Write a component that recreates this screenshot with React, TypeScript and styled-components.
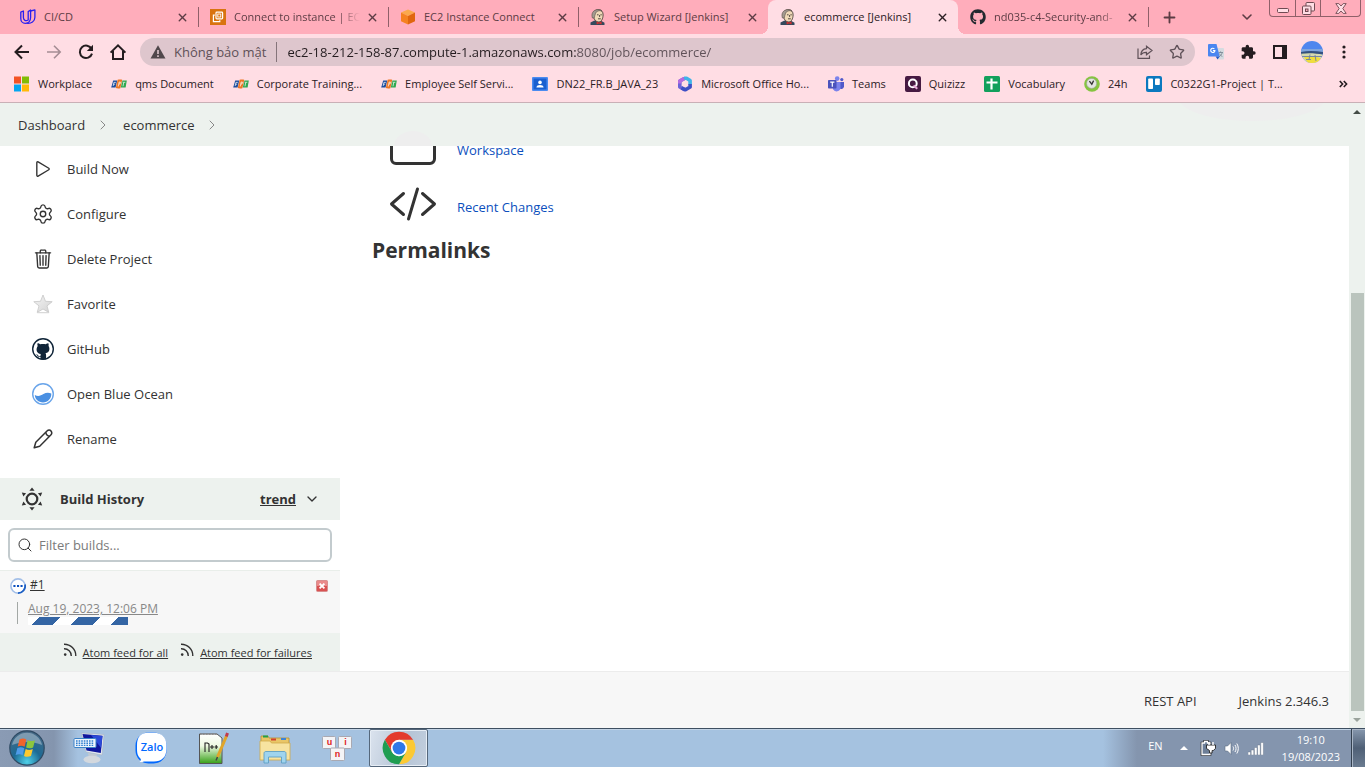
import React from 'react';
import styled, { createGlobalStyle, css } from 'styled-components';
import { FaGithub } from 'react-icons/fa';
import { IoPlayOutline, IoTrashOutline } from 'react-icons/io5';
import { Settings, X, Plus, ChevronDown, ChevronRight, Search, Star } from 'lucide-react';

const ink = '#333333';
const sage = '#edf2ee';
const uiFont = '"Open Sans", "Noto Sans", sans-serif';

const GlobalStyle = createGlobalStyle`
  *, *::before, *::after { box-sizing: border-box; }
  body { margin: 0; font-family: ${uiFont}; font-size: 13px; color: ${ink}; background: #fff; }
  button, input { font: inherit; color: inherit; }
  button { border: 0; padding: 0; background: none; display: flex; align-items: center; justify-content: center; }
  a { color: inherit; text-decoration: none; }
  svg { display: block; flex: none; }
  ul, ol { margin: 0; padding: 0; list-style: none; }
`;

const Screen = styled.div`
  min-height: 100vh;
  display: flex;
  flex-direction: column;
`;

/* ---------- browser frame ---------- */

const TabStrip = styled.div`
  display: flex;
  align-items: center;
  height: 34px;
  padding-left: 8px;
  background: #ffadbb;
`;

const TabItem = styled.div<{ $active?: boolean; $line?: boolean }>`
  position: relative;
  width: 190px;
  height: 34px;
  padding: 0 8px 0 12px;
  display: flex;
  align-items: center;
  color: ${p => (p.$active ? '#2b2024' : '#5c3c44')};
  ${p => p.$line && css`
    &::after {
      content: '';
      position: absolute;
      right: -1px;
      top: 7px;
      width: 1px;
      height: 20px;
      background: #8f6069;
    }
  `}
  ${p => p.$active && css`
    background: #ffdde4;
    border-radius: 8px 8px 0 0;
    &::before, &::after {
      content: '';
      position: absolute;
      bottom: 0;
      width: 8px;
      height: 8px;
    }
    &::before { left: -8px; background: radial-gradient(circle at 0 0, transparent 8px, #ffdde4 8px); }
    &::after { right: -8px; background: radial-gradient(circle at 100% 0, transparent 8px, #ffdde4 8px); }
  `}
`;

const TabLink = styled.a`
  display: flex;
  align-items: center;
  gap: 8px;
  flex: 1;
  min-width: 0;
`;

const TabTitle = styled.span`
  flex: 1;
  white-space: nowrap;
  line-height: 20px;
  font-size: 11px;
`;

const FadingTitle = styled(TabTitle)`
  mask-image: linear-gradient(to right, #000 104px, transparent 126px);
`;

const TabClose = styled.button`
  width: 16px;
  height: 16px;
  margin-left: 4px;
`;

const StripButton = styled.button`
  width: 28px;
  height: 28px;
  margin-left: 7px;
  color: #5c3c44;
`;

const StripEnd = styled.div`
  margin-left: auto;
  display: flex;
  align-self: stretch;
  align-items: center;
  gap: 8px;
  padding-right: 4px;
`;

const WindowControls = styled.div`
  display: flex;
  align-self: flex-start;
  height: 17px;
  border: 1px solid #8f6069;
  border-top: 0;
  border-radius: 0 0 4px 4px;
`;

const WindowButton = styled.button<{ $wide?: boolean }>`
  width: ${p => (p.$wide ? 40 : 25)}px;
  height: 16px;
  & + & { border-left: 1px solid #8f6069; }
`;

const Toolbar = styled.div`
  display: flex;
  align-items: center;
  height: 36px;
  padding: 0 5px 0 6px;
  background: #ffdde4;
`;

const ToolButton = styled.button<{ $dim?: boolean }>`
  width: 32px;
  height: 32px;
  color: ${p => (p.$dim ? '#a58d94' : '#241c1f')};
`;

const Omnibox = styled.form`
  flex: 1;
  display: flex;
  align-items: center;
  height: 28px;
  margin: 0 5px 0 6px;
  padding: 0 2px 0 10px;
  border-radius: 14px;
  background: #dec6cd;
  color: #5f5158;
`;

const SiteInfo = styled.button`
  gap: 8px;
  height: 20px;
  padding-right: 10px;
  border-right: 1px solid #85747a;
  font-size: 13px;
  line-height: 18px;
  white-space: nowrap;
`;

const Address = styled.input`
  flex: 1;
  min-width: 0;
  height: 26px;
  margin-left: 10px;
  padding: 0;
  border: 0;
  outline: 0;
  font-size: 13px;
  color: #241c1f;
  -webkit-text-fill-color: transparent;
  background: linear-gradient(to right, #241c1f 290px, #5f5158 290px);
  -webkit-background-clip: text;
  background-clip: text;
`;

const Bookmarks = styled.nav`
  display: flex;
  align-items: center;
  height: 33px;
  padding: 0 17px 4px 14px;
  gap: 19px;
  background: #ffdde4;
  border-bottom: 1px solid #c9b0b6;
  white-space: nowrap;
`;

const Bookmark = styled.a`
  display: flex;
  align-items: center;
  gap: 8px;
  font-size: 11px;
  line-height: 16px;
  color: #2b2024;
`;

const MoreBookmarks = styled.button`
  margin-left: auto;
`;

/* ---------- page ---------- */

const Viewport = styled.div`
  flex: 1;
  display: flex;
`;

const Page = styled.div`
  flex: 1;
  min-width: 0;
  display: flex;
  flex-direction: column;
`;

const Breadcrumbs = styled.nav`
  position: relative;
  height: 43px;
  overflow: hidden;
  background: ${sage};
  padding: 0 18px;
  ol { position: relative; display: flex; align-items: center; height: 43px; }
  li { display: flex; align-items: center; }
`;

const Crumb = styled.a`
  font-size: 13px;
  line-height: 20px;
  color: ${ink};
`;

const CrumbArrow = styled.button`
  width: 38px;
  height: 20px;
  padding-right: 3px;
  color: #888;
`;

const Haze = styled.span<{ $left: number; $top: number; $w: number; $h: number }>`
  position: absolute;
  left: ${p => p.$left}px;
  top: ${p => p.$top}px;
  width: ${p => p.$w}px;
  height: ${p => p.$h}px;
  border-radius: 50%;
  background: #eeeeee;
`;

const Body = styled.div`
  flex: 1;
  display: flex;
  background: #fff;
`;

const Side = styled.aside`
  width: 340px;
  display: flex;
  flex-direction: column;
`;

const TaskList = styled.ul`
  margin-bottom: 17px;
`;

const TaskLink = styled.a`
  display: flex;
  align-items: center;
  gap: 12px;
  height: 45px;
  padding-left: 31px;
  font-size: 13px;
  font-weight: 500;
  line-height: 20px;
`;

const TaskIcon = styled.span`
  width: 24px;
  height: 24px;
  display: flex;
  align-items: center;
  justify-content: center;
`;

const HistoryHead = styled.div`
  display: flex;
  align-items: center;
  height: 42px;
  padding: 0 20px 1px;
  background: ${sage};
  font-size: 13px;
  font-weight: 700;
`;

const HistoryTitle = styled.h2`
  flex: 1;
  margin: 0 0 0 16px;
  font-size: 13px;
  font-weight: 700;
  line-height: 20px;
`;

const TrendLink = styled.a`
  text-decoration: underline;
  margin-right: 8px;
`;

const FilterBox = styled.label`
  display: flex;
  align-items: center;
  gap: 6px;
  height: 34px;
  margin: 8px;
  padding: 0 8px 0 7px;
  border: 2px solid #c3cbce;
  border-radius: 6px;
  background: #fff;
`;

const FilterInput = styled.input`
  flex: 1;
  min-width: 0;
  padding: 0;
  border: 0;
  outline: 0;
  background: none;
  font-size: 13px;
  &::placeholder { color: #7b7b7b; opacity: 1; }
`;

const BuildRow = styled.div`
  height: 63px;
  padding: 6px 12px 0 10px;
  background: #f7f7f7;
  border-top: 1px solid #e9eeea;
`;

const BuildTop = styled.div`
  display: flex;
  align-items: center;
  height: 18px;
`;

const BuildLink = styled.a`
  flex: 1;
  margin-left: 4px;
  padding-bottom: 2px;
  font-size: 12px;
  line-height: 16px;
  text-decoration: underline;
`;

const BuildInfo = styled.div`
  margin: 7px 0 0 7px;
  padding-left: 10px;
  height: 22px;
  border-left: 1px solid #a3a8a5;
`;

const BuildDate = styled.a`
  display: block;
  font-size: 12px;
  line-height: 14px;
  color: #888;
  text-decoration: underline;
`;

const Progress = styled.div`
  width: 100px;
  height: 8px;
  margin-top: 1px;
  background: repeating-linear-gradient(135deg, #fff 0 8px, #3465a4 8px 23px, #fff 23px 28px);
`;

const Feeds = styled.div`
  display: flex;
  justify-content: flex-end;
  gap: 12px;
  height: 38px;
  padding: 10px 28px 0 0;
  background: ${sage};
`;

const FeedLink = styled.a`
  display: flex;
  gap: 6px;
  font-size: 11px;
  line-height: 20px;
  span { text-decoration: underline; }
`;

const Main = styled.main`
  flex: 1;
  overflow: hidden;
  padding: 0 32px;
`;

const ShortcutList = styled.ul`
  margin: -23px 0 0 17px;
  display: flex;
  flex-direction: column;
  gap: 9px;
`;

const Shortcut = styled.a`
  display: flex;
  align-items: center;
  gap: 20px;
  height: 48px;
  font-size: 13px;
  color: #0b4fbd;
  span { padding-top: 6px; line-height: 20px; }
`;

const Heading = styled.h2`
  margin: 6px 0 0;
  font-size: 21px;
  font-weight: 700;
  line-height: 32px;
`;

const Footer = styled.footer`
  display: flex;
  align-items: center;
  justify-content: flex-end;
  gap: 42px;
  height: 57px;
  padding: 2px 20px 0;
  background: #f7f7f7;
  border-top: 1px solid #ececec;
  font-size: 13px;
  line-height: 20px;
`;

const ScrollTrack = styled.div`
  width: 16px;
  display: flex;
  flex-direction: column;
  align-items: center;
  background: ${sage};
`;

const ScrollArrow = styled.button`
  width: 16px;
  height: 17px;
`;

const ScrollSpace = styled.div`
  flex: 173;
`;

const ScrollThumb = styled.div`
  flex: 418;
  width: 13px;
  background: #bac4bd;
`;

/* ---------- taskbar ---------- */

const Taskbar = styled.div`
  display: flex;
  align-items: stretch;
  height: 39px;
  border-top: 1px solid #3e4f61;
  box-shadow: inset 0 1px 0 #c3d4e6;
  background: linear-gradient(to right, #8a9bb4 0, #8495ae 54px, #a5c2e0 78px, #a5c2e0 calc(100% - 262px), #8495ae calc(100% - 228px));
`;

const StartButton = styled.button`
  width: 54px;
  margin-right: 4px;
`;

const TaskButton = styled.button<{ $open?: boolean }>`
  width: ${p => (p.$open ? 59 : 62)}px;
  ${p => p.$open && css`
    margin-left: 1px;
    border: 1px solid #55677b;
    border-radius: 2px;
    box-shadow: inset 0 0 0 1px #e6edf5;
    background: linear-gradient(105deg, #dbe3ee, #b5c4d6 60%, #c3cfde);
  `}
`;

const Tray = styled.div`
  margin-left: auto;
  display: flex;
  align-items: center;
  color: #fff;
  font-size: 11px;
`;

const Language = styled.button`
  margin-right: 9px;
  padding-bottom: 5px;
`;

const TrayButton = styled.button`
  width: 24px;
  height: 24px;
`;

const Clock = styled.time`
  margin: 0 11px 0 14px;
  text-align: center;
  line-height: 17px;
`;

const ShowDesktop = styled.button`
  width: 14px;
  height: 38px;
  border-left: 1px solid #33404f;
  box-shadow: inset 1px 1px 0 #a9b6c6;
  background: linear-gradient(#8798ae, #4f6076 50%, #6a7b90);
`;

/* ---------- drawings ---------- */

const UdacityIcon = () => (
  <svg width="16" height="16" viewBox="0 0 16 16" fill="none" stroke="#2a20f0" strokeWidth="1.3" strokeLinejoin="round">
    <path d="M.8 3.200 3.400 2v6.600c0 2.600 2.400 3.800 4.800 2.400V2.600L10.600 1v7.600c0 3.600-2.400 5.800-5.200 5.800C2.400 14.400.8 12 .8 9.400z" />
    <path d="M10.600 2 14.900.8v7.400c0 4-3.600 6.800-8.400 6" />
  </svg>
);

const Ec2Icon = () => (
  <svg width="16" height="16" viewBox="0 0 16 16" fill="none" stroke="#fff" strokeWidth="1.200">
    <rect width="16" height="16" fill="#d9730f" stroke="none" />
    <rect x="6" y="3.200" width="6.600" height="6.600" rx=".8" />
    <rect x="7.800" y="5" width="3" height="3" strokeWidth=".9" />
    <path d="M4.800 6.200H3.400v6.400h6.400v-1.400" />
  </svg>
);

const CubeIcon = () => (
  <svg width="16" height="16" viewBox="0 0 16 16">
    <path d="M8 .5 15 3.600 8 7 1 3.600z" fill="#fba94c" />
    <path d="M1 3.600 8 7v8.600l-7-3.400z" fill="#f58220" />
    <path d="M15 3.600 8 7v8.600l7-3.400z" fill="#e0660e" />
  </svg>
);

const ButlerIcon = () => (
  <svg width="16" height="16" viewBox="0 0 16 16">
    <path d="M.5 16v-2.600l4-1.800 6.500.2 3.500 2V16z" fill="#33495c" />
    <path d="M3.200 6C3 2.400 5 .8 8.200.8s5 1.800 4.900 5.200c-.1 3.600-1.600 7-4.400 7S3.300 9.800 3.200 6z" fill="#efd9b7" stroke="#4a3f3a" strokeWidth=".9" />
    <path d="M2.400 9C1 5 2.600 1.200 7.600.5c2-.2 3.600.4 4.400 1.500-3-.8-5.600 0-6.400 2.200C5 6 4.600 7.400 4.200 9z" fill="#a39a90" stroke="#4a3f3a" strokeWidth=".5" />
    <path d="M7 5.800h1.600M10.400 5.800h1.400M9.600 6v2M8 9.800h2.800" fill="none" stroke="#4a3f3a" strokeWidth=".9" />
    <path d="M6.600 12.400 9 13.600l2.600-1.200v3L9 14.600l-2.400.8z" fill="#d02f2f" />
  </svg>
);

const MicrosoftIcon = () => (
  <svg width="16" height="16" viewBox="0 0 16 16">
    <path d="M0 .5h7v7H0z" fill="#f35325" />
    <path d="M8 .5h7v7H8z" fill="#81bc06" />
    <path d="M0 8.500h7v7H0z" fill="#05a6f0" />
    <path d="M8 8.500h7v7H8z" fill="#ffba08" />
  </svg>
);

const FptIcon = () => (
  <svg width="16" height="16" viewBox="0 0 16 16">
    <path d="M2.200 4.500h4L4.600 11.500H.2z" fill="#1f4f9e" />
    <path d="M6.600 3.800c1.600-.5 3.200-.5 4.600 0L9.400 12.200c-1.800.4-3.200.4-4.600-.2z" fill="#ee7623" />
    <path d="M11.400 4.500h4.400l-1.200 7H9.800z" fill="#2fa84f" />
    <path d="M2.200 10l.7-3.600h1.900M2.600 8.200h1.500M7.200 10.500l1-4.500h1.200l-.4 2H7.900M12 10.300l.7-3.700M11.700 6.300h2.600" fill="none" stroke="#fff" strokeWidth=".7" />
  </svg>
);

const ClassroomIcon = () => (
  <svg width="16" height="16" viewBox="0 0 16 16">
    <rect y="1" width="16" height="14" rx="1" fill="#4a8bf0" />
    <rect x="1.500" y="2.500" width="13" height="11" fill="#1a5fd0" />
    <circle cx="8" cy="6.400" r="1.800" fill="#fff" />
    <path d="M4.400 11.500c0-1.700 1.800-2.500 3.600-2.500s3.600.8 3.600 2.500z" fill="#fff" />
  </svg>
);

const OfficeIcon = () => (
  <svg width="16" height="16" viewBox="0 0 16 16" fill="none" strokeWidth="3.600" strokeLinejoin="round">
    <path d="M7.500 2.500 2.800 5v6L8 13.800" stroke="#6a63d9" />
    <path d="M7 2.300h2.500l3.600 2.300v4" stroke="#3fb4e8" />
    <path d="M13.100 8v3L8.500 13.800 4.500 11.800" stroke="#3d4fc4" />
    <path d="M2.800 7.500V5L7 2.600" stroke="#b56be0" />
  </svg>
);

const TeamsIcon = () => (
  <svg width="16" height="16" viewBox="0 0 16 16">
    <circle cx="9.200" cy="2.600" r="2.300" fill="#7b83eb" />
    <circle cx="13.800" cy="3.600" r="1.600" fill="#5059c9" />
    <path d="M11 6h5v4.500a2.800 2.800 0 0 1-5 1.500z" fill="#5059c9" />
    <path d="M5 6h7.500v5.500a4 4 0 0 1-7.500 1.800z" fill="#7b83eb" />
    <rect y="4" width="8.500" height="8.500" rx=".8" fill="#4b53bc" />
    <path d="M2.200 6.200h4.200M4.300 6.200v4.600" stroke="#fff" strokeWidth="1.200" />
  </svg>
);

const QuizizzIcon = () => (
  <svg width="16" height="16" viewBox="0 0 16 16" fill="none">
    <rect width="16" height="16" rx="2" fill="#461a42" />
    <circle cx="7.800" cy="7.400" r="3.900" stroke="#fff" strokeWidth="2" />
    <path d="M8.500 9.500l3.800 3.300" stroke="#e8a8d8" strokeWidth="2" />
  </svg>
);

const SheetIcon = () => (
  <svg width="16" height="16" viewBox="0 0 16 16">
    <rect width="16" height="16" rx="1.500" fill="#12a05c" />
    <path d="M2.500 6.500h11M7.500 2.500v11" stroke="#fff" strokeWidth="2.200" />
  </svg>
);

const ClockIcon = () => (
  <svg width="16" height="16" viewBox="0 0 16 16">
    <circle cx="8" cy="8" r="7.800" fill="#86c440" />
    <circle cx="7.600" cy="7.400" r="5" fill="#e4e6e2" stroke="#9aa094" strokeWidth=".6" />
    <path d="M5.400 5.200l2.400 3 1.800-3.600" fill="none" stroke="#333" strokeWidth="1.300" />
  </svg>
);

const TrelloIcon = () => (
  <svg width="16" height="16" viewBox="0 0 16 16">
    <rect width="16" height="16" rx="2" fill="#0b79bf" />
    <rect x="2.200" y="2.400" width="4.800" height="10.600" rx=".8" fill="#fff" />
    <rect x="9" y="2.400" width="4.800" height="6.600" rx=".8" fill="#fff" />
  </svg>
);

const BackIcon = () => (
  <svg width="16" height="16" viewBox="0 0 16 16" fill="none" stroke="currentColor" strokeWidth="2">
    <path d="M15 8H2M8 1.500 1.500 8 8 14.500" />
  </svg>
);

const ForwardIcon = () => (
  <svg width="16" height="16" viewBox="0 0 16 16" fill="none" stroke="currentColor" strokeWidth="1.600">
    <path d="M1 8h13M8 1.800 14.200 8 8 14.200" />
  </svg>
);

const ReloadIcon = () => (
  <svg width="16" height="16" viewBox="0 0 16 16" fill="none">
    <path d="M13.600 5A6.200 6.200 0 1 0 14 9.600" stroke="currentColor" strokeWidth="2" />
    <path d="M15 .8v6.200H8.800z" fill="currentColor" />
  </svg>
);

const HomeIcon = () => (
  <svg width="18" height="18" viewBox="0 0 18 18" fill="none" stroke="currentColor" strokeWidth="2">
    <path d="M1.600 9.600 9 2.300l7.400 7.300M4 8v8h10V8" />
  </svg>
);

const WarningIcon = () => (
  <svg width="16" height="16" viewBox="0 0 16 16">
    <path d="M8 1.200 15.500 14.500H.5z" fill="#50474b" />
    <path d="M8 6v4M8 11.300v1.600" stroke="#dec6cd" strokeWidth="1.600" />
  </svg>
);

const ShareIcon = () => (
  <svg width="16" height="16" viewBox="0 0 16 16" fill="none" stroke="#5f5158" strokeWidth="1.200">
    <path d="M1 4.500V14.300H12.500V11.500" />
    <path d="M9.500 2.200 15 6.500 9.500 10.700V8.300C6.600 8.200 5 9 3.800 11 4 7.500 6 5 9.500 4.700z" />
  </svg>
);

const TranslateIcon = () => (
  <svg width="16" height="16" viewBox="0 0 16 16">
    <path d="M7 4h8a1 1 0 0 1 1 1v9.500a1 1 0 0 1-1 1H10z" fill="#d5dbe0" />
    <path d="M10.500 8.500h4.500M12.600 7.400v1.200M14.200 8.800c-.6 2-2 3.200-3.200 4M11.400 9.500c.8 1.600 1.800 2.500 3 3" fill="none" stroke="#7d8a96" strokeWidth=".9" />
    <path d="M1 0h7.500l3.200 12.500H1a1 1 0 0 1-1-1V1a1 1 0 0 1 1-1z" fill="#4a86f0" />
    <path d="M7.600 12.500h4.100L9.600 15.600z" fill="#1f57c9" />
    <path d="M6.400 5a2.100 2.100 0 1 0 .5 1.600H4.900" fill="none" stroke="#fff" strokeWidth="1.100" />
  </svg>
);

const PuzzleIcon = () => (
  <svg width="16" height="16" viewBox="0 0 24 24" fill="currentColor">
    <path d="M21 11h-1.500V7c0-1.100-.9-2-2-2h-4V3.500a2.500 2.500 0 0 0-5 0V5h-4c-1.100 0-2 .9-2 2v3.800H4c1.500 0 2.700 1.200 2.700 2.700S5.500 16.200 4 16.200H2.500V20c0 1.100.9 2 2 2h3.800v-1.500c0-1.500 1.200-2.700 2.700-2.700s2.700 1.200 2.700 2.700V22h3.800c1.100 0 2-.9 2-2v-4H21a2.500 2.500 0 0 0 0-5z" />
  </svg>
);

const PanelIcon = () => (
  <svg width="14" height="14" viewBox="0 0 14 14">
    <path d="M1 1h12v12H1z" fill="none" stroke="currentColor" strokeWidth="2" />
    <path d="M9 1h4v12H9z" fill="currentColor" />
  </svg>
);

const AvatarIcon = () => (
  <svg width="22" height="22" viewBox="0 0 22 22">
    <clipPath id="avatar"><circle cx="11" cy="11" r="11" /></clipPath>
    <g clipPath="url(#avatar)">
      <rect width="22" height="22" fill="#4f86ee" />
      <path d="M0 8h22v3H0z" fill="#7fa4dc" />
      <path d="M0 11c7-1.500 15-1 22 0v2.500H0z" fill="#33507e" />
      <path d="M0 12.800c8-1 15-.5 22 1V22H0z" fill="#d5d9ae" />
      <path d="M3 16c6-2 12-1 18 2l-2 4H7z" fill="#f0dd3c" />
      <path d="M1 15.500h20M5 18.500h5M9 13.500l-1 5M14 14l1 6" stroke="#6b7fa6" strokeWidth=".9" />
    </g>
  </svg>
);

const DotsIcon = () => (
  <svg width="4" height="14" viewBox="0 0 4 14" fill="currentColor">
    <circle cx="2" cy="2" r="1.600" /><circle cx="2" cy="7" r="1.600" /><circle cx="2" cy="12" r="1.600" />
  </svg>
);

const MoreIcon = () => (
  <svg width="9" height="8" viewBox="0 0 9 8" fill="none" stroke="#241c1f" strokeWidth="1.600">
    <path d="M.8 1 3.600 4 .8 7M4.800 1 7.600 4 4.800 7" />
  </svg>
);

const MinimizeIcon = () => (
  <svg width="12" height="12" viewBox="0 0 12 12">
    <rect x=".5" y="6.500" width="11" height="4" rx="1" fill="#ffdde4" stroke="#6e4a52" />
  </svg>
);

const RestoreIcon = () => (
  <svg width="13" height="13" viewBox="0 0 13 13" fill="#ffdde4" stroke="#6e4a52">
    <rect x="4" y=".500" width="8.500" height="8.500" rx="1" />
    <rect x=".500" y="4" width="8.500" height="8.500" rx="1" />
    <rect x="3.500" y="7" width="2.500" height="2.500" fill="#ffadbb" />
  </svg>
);

const CloseWindowIcon = () => (
  <svg width="12" height="11" viewBox="0 0 12 11">
    <path d="M.8.6h3L6 3 8.200.6h3L7.800 5.500l3.400 4.900h-3L6 8 3.800 10.400h-3L4.200 5.500z" fill="#ffdde4" stroke="#6e4a52" strokeWidth=".9" />
  </svg>
);

const FavoriteIcon = () => (
  <svg width="20" height="20" viewBox="0 0 20 20">
    <defs>
      <linearGradient id="silver" x1="0" y1="0" x2="1" y2="1">
        <stop offset="0" stopColor="#f6f6f6" /><stop offset="1" stopColor="#d2d2d2" />
      </linearGradient>
    </defs>
    <path d="M10 1l2.500 6.300 6.700.4-5.200 4.200 1.800 6.500L10 15l-5.800 3.400L6 11.900.8 7.700l6.700-.4z" fill="url(#silver)" stroke="#c6c6c6" strokeWidth=".8" />
    <path d="M4.200 18.700h11.600" stroke="#d0d0d0" />
  </svg>
);

const OctocatIcon = () => (
  <svg width="22" height="22" viewBox="0 0 22 22">
    <circle cx="11" cy="11" r="10.300" fill="#fff" stroke="#0f2438" strokeWidth="1.400" />
    <path d="M5.600 5.200c1 0 2 .5 2.700 1 1.700-.4 3.700-.4 5.400 0 .8-.5 1.700-1 2.700-1 .4 1 .4 1.900.1 2.700 1.600 2 1.400 6.600-3 7.300.5.600.6 1.200.6 2.200v4H8.500v-2.600c-1.700.4-2.700-.1-3.400-1.300-.3-.6-.7-.9-1.100-1.200 1.200-.3 1.900.6 2.500 1.400.5.600 1.200.6 2 .4 0-1.200.1-1.600.4-2-4.700-.7-5.200-5.200-3.200-8.200-.3-.8-.5-1.700-.1-2.700z" fill="#0f2438" />
  </svg>
);

const OceanIcon = () => (
  <svg width="22" height="22" viewBox="0 0 22 22">
    <circle cx="11" cy="11" r="10.300" fill="#fff" stroke="#6aa5ea" strokeWidth="1.400" />
    <path d="M2.800 12c3.400 1.800 6 .6 8.600-.9 2.600-1.500 5-1.700 7.900-.6.300 5-3.500 8.900-8.300 8.900-4.500 0-8-3.300-8.200-7.400z" fill="#4a90e2" />
  </svg>
);

const PencilIcon = () => (
  <svg width="20" height="20" viewBox="0 0 20 20" fill="none" stroke={ink} strokeWidth="1.500" strokeLinejoin="round">
    <path d="M1.200 18.800 2.800 13.200 14 2c1.300-1.300 3-1.300 4 0s1 2.800-.2 4L6.700 17.200z" />
    <path d="M12.800 3.200c.2 2.300 1.700 3.800 4 4" />
  </svg>
);

const WeatherIcon = () => (
  <svg width="24" height="24" viewBox="0 0 24 24" fill={ink}>
    <circle cx="12" cy="12" r="5.300" fill="none" stroke={ink} strokeWidth="2.200" />
    <path d="M12 .5l2.600 3.300H9.400zM12 23.500l2.600-3.300H9.400zM1.800 5.500l4.300.7-2.700 3.400zM22.200 5.500l-4.300.7 2.700 3.400zM1.800 18.500l4.300-.7-2.700-3.400zM22.200 18.500l-4.300-.7 2.700-3.400z" />
  </svg>
);

const RunningIcon = () => (
  <svg width="16" height="16" viewBox="0 0 16 16" fill="none">
    <circle cx="8" cy="8" r="7.100" fill="#fff" stroke="#a3bfe8" strokeWidth="1.600" />
    <path d="M15 6.500A7.100 7.100 0 0 1 8 15.100" stroke="#1d5fc4" strokeWidth="1.800" />
    <path d="M3.400 8h2.100M7 8h2.100M10.500 8h2.100" stroke="#0b4fbd" strokeWidth="2" />
  </svg>
);

const StopIcon = () => (
  <svg width="12" height="12" viewBox="0 0 12 12">
    <rect x=".5" y=".5" width="11" height="11" rx="1" fill="#d95252" stroke="#d88f8f" />
    <path d="M1 1h10v5H1z" fill="#ea8a8a" />
    <path d="M3.600 3.600l4.800 4.800M8.400 3.600 3.600 8.400" stroke="#fff" strokeWidth="1.800" />
  </svg>
);

const FeedIcon = () => (
  <svg width="14" height="14" viewBox="0 0 14 14" fill="none" stroke={ink} strokeWidth="1.400">
    <path d="M1 1.200A11.500 11.500 0 0 1 12.800 13M1 5.800A7 7 0 0 1 8.300 13" />
    <circle cx="2.200" cy="11.600" r="1.300" fill={ink} stroke="none" />
  </svg>
);

const FolderIcon = () => (
  <svg width="48" height="48" viewBox="0 0 48 48" fill="none" stroke={ink} strokeWidth="3">
    <path d="M2.500 14v22a4.500 4.500 0 0 0 4.500 4.500h34a4.500 4.500 0 0 0 4.500-4.500V16a4.500 4.500 0 0 0-4.500-4.500H24L19 8H7a4.500 4.500 0 0 0-4.500 4.500z" />
  </svg>
);

const CodeIcon = () => (
  <svg width="48" height="48" viewBox="0 0 48 48" fill="none" stroke={ink} strokeWidth="3" strokeLinecap="round" strokeLinejoin="round">
    <path d="M14.500 13.500 2.500 24 14.500 34.500M33.500 13.500 45.500 24 33.500 34.500M28.500 9l-9 30" />
  </svg>
);

const Triangle = ({ down, color }: { down?: boolean; color: string }) => (
  <svg width="8" height="4" viewBox="0 0 8 4">
    <path d={down ? 'M0 0h8L4 4z' : 'M0 4h8L4 0z'} fill={color} />
  </svg>
);

const StartIcon = () => (
  <svg width="36" height="36" viewBox="0 0 36 36">
    <defs>
      <radialGradient id="orb" cx=".5" cy=".9" r=".9">
        <stop offset="0" stopColor="#4fd0e8" /><stop offset=".45" stopColor="#1c6a94" /><stop offset="1" stopColor="#4a6a86" />
      </radialGradient>
    </defs>
    <circle cx="18" cy="18" r="17.200" fill="url(#orb)" stroke="#2f4a63" strokeWidth="1.200" />
    <path d="M3 15a15.300 15.300 0 0 1 30 0c-9-4-20-4-30 0z" fill="#a9bccb" opacity=".6" />
    <path d="M10.500 9.500c2.600-1.400 4.700-1.200 6.800 0l-1.700 7.200c-2.200-1.300-4.400-1.300-6.900-.2z" fill="#f0642c" />
    <path d="M18.600 10.200c2.300 1.200 4.600 1.200 7.400 0l-1.900 7.200c-2.500 1.200-4.900 1-7 0z" fill="#8cc63e" />
    <path d="M8.400 18c2.500-1.100 4.700-1 6.900.3l-1.700 7c-2.200-1.300-4.400-1.300-7-.2z" fill="#4f9be8" />
    <path d="M16.700 19c2.200 1.200 4.500 1.200 7.100 0l-1.800 7c-2.600 1.100-4.800 1.100-7-.1z" fill="#fdc92e" />
  </svg>
);

const KeyboardScreenIcon = () => (
  <svg width="32" height="32" viewBox="0 0 32 32">
    <path d="M8.500 1 31 2.500 29 23 13 20z" fill="#e3e9ef" stroke="#a9b4c0" strokeWidth=".6" />
    <path d="M9.500 2 29.500 3.800 27.800 21 13.500 18.500z" fill="#10179e" />
    <path d="M18 3l11.500 1-1.400 12z" fill="#2b49d8" />
    <path d="M15 21l9 1.500-1 4h-7z" fill="#c3cad2" />
    <ellipse cx="19" cy="27.500" rx="8.500" ry="3.800" fill="#d3d8de" />
    <rect x="1" y="6.500" width="22" height="9" rx="1" fill="#eef5fc" stroke="#3c83c8" />
    <path d="M3 9h18M3 11.200h18M3 13.400h18" stroke="#2f7fd0" strokeWidth="1.400" strokeDasharray="1.600 1" />
  </svg>
);

const ZaloIcon = () => (
  <svg width="32" height="32" viewBox="0 0 32 32">
    <rect x=".5" y=".5" width="31" height="31" rx="13" fill="#0068ff" />
    <path d="M13 .8h6c8 0 12.400 5 12.400 12v4.500c0 8-5 12.200-12.400 12.200H9c-2 .8-3 .6-4.500.5 1.200-1 1.500-2 1.300-3C2.600 24 2 21 2 17v-4C2 5 6 .8 13 .8z" fill="#fff" />
    <text x="17" y="19" fontFamily="Open Sans" fontWeight="600" fontSize="11" textAnchor="middle" fill="#0068ff">Zalo</text>
  </svg>
);

const NotepadIcon = () => (
  <svg width="32" height="32" viewBox="0 0 32 32">
    <defs>
      <linearGradient id="note" x1="0" y1="0" x2="0" y2="1">
        <stop offset="0" stopColor="#fff" /><stop offset=".4" stopColor="#eef9e2" /><stop offset="1" stopColor="#37a018" />
      </linearGradient>
    </defs>
    <path d="M2.500 2H20l5 4v25.500H2.500z" fill="url(#note)" stroke="#555" />
    <path d="M3 2h17" stroke="#888" strokeWidth="1.500" strokeDasharray="1.500 1.500" />
    <path d="M8 20v-9h2.500l1.500 1v8M13 15h4M15 13v4M17.500 15h3.500M19.200 13v4" fill="none" stroke="#222" strokeWidth="1.100" />
    <path d="M29.500 4 20.500 25" stroke="#e0a52a" strokeWidth="3" />
    <path d="M30.500 1 29.300 4.500" stroke="#c23a4a" strokeWidth="3" />
    <path d="M20.500 25l-1.500 3.500" stroke="#444" strokeWidth="1.500" />
  </svg>
);

const ExplorerIcon = () => (
  <svg width="32" height="32" viewBox="0 0 32 32">
    <path d="M2 4h7l1 2h20v21H2z" fill="#e9c667" stroke="#b58f33" strokeWidth=".8" />
    <path d="M4 3.500h5v2H4z" fill="#22a04a" />
    <path d="M12 6.500h5v2h-5z" fill="#d2422f" />
    <path d="M22 6h5v2h-5z" fill="#3c83d8" />
    <path d="M1 9h10l1.500 2H31v17H1z" fill="#f7e3a0" stroke="#cfa94a" strokeWidth=".8" />
    <path d="M5 31v-9.500c0-1.500.8-2 2-2h18c1.200 0 2 .5 2 2V31h-4.500v-6h-13v6z" fill="#9fd4ee" stroke="#5f9fc4" strokeWidth=".9" />
  </svg>
);

const UnikeyIcon = () => (
  <svg width="32" height="32" viewBox="0 0 32 32" fontFamily="Liberation Sans" fontWeight="700" fontSize="9" textAnchor="middle">
    <g fill="#f4f4f6" stroke="#a9a9b2">
      <rect x="1.500" y="4.500" width="13" height="12" rx="1" />
      <rect x="17.500" y="4.500" width="13" height="12" rx="1" />
      <rect x="9.500" y="16" width="14" height="12.500" rx="1" />
    </g>
    <g fill="#e02424">
      <text x="8.500" y="13">u</text><text x="24.500" y="13">i</text><text x="16.500" y="25">n</text>
    </g>
  </svg>
);

const ChromeIcon = () => (
  <svg width="34" height="34" viewBox="0 0 48 48">
    <path d="M43.920 12.500A23 23 0 0 1 24 47L33.960 29.750 24 12.500z" fill="#fcc934" />
    <path d="M4.080 12.500A23 23 0 0 1 43.920 12.500H24v11.500L14.040 29.750z" fill="#e33b2e" />
    <path d="M4.080 12.500 14.040 29.750A11.500 11.500 0 0 0 33.960 29.750L24 47A23 23 0 0 1 4.080 12.500z" fill="#1f9d51" />
    <circle cx="24" cy="24" r="11.500" fill="#fff" />
    <circle cx="24" cy="24" r="9" fill="#2f78e8" />
  </svg>
);

const PowerIcon = () => (
  <svg width="16" height="16" viewBox="0 0 16 16">
    <path d="M2 3h2.500V1.500h3V3h2.500v11.500H2z" fill="none" stroke="#222" strokeWidth="2.600" />
    <path d="M2 3h2.500V1.500h3V3h2.500v11.500H2z" fill="#6d7f98" stroke="#fff" strokeWidth="1.300" />
    <path d="M6.500 5h9v3.500l-2.200 2h-1.200V13H9.500v-2.500L6.500 8.500z" fill="#fff" stroke="#222" strokeWidth=".9" />
    <path d="M9 2v3M13 2v3" stroke="#fff" strokeWidth="1.400" />
  </svg>
);

const SpeakerIcon = () => (
  <svg width="15" height="15" viewBox="0 0 15 15" fill="none">
    <path d="M1 5h2.500L7 1.500v12L3.500 10H1z" fill="#fff" stroke="#5d6c80" strokeWidth=".6" />
    <path d="M9 5.500c.8 1.200.8 2.800 0 4M11 4c1.400 2 1.400 5 0 7M12.800 2.500c2 3 2 7 0 10" stroke="#fff" />
  </svg>
);

const SignalIcon = () => (
  <svg width="16" height="13" viewBox="0 0 16 13" fill="#fff" stroke="#5d6c80" strokeWidth=".4">
    <path d="M0 10h2.600v3H0zM3.200 8h2.600v5H3.200zM6.400 5.500H9V13H6.400zM9.600 3h2.600v10H9.600zM12.800.5h2.600V13h-2.600z" />
  </svg>
);

/* ---------- data ---------- */

const tabs = [
  { title: 'CI/CD', icon: <UdacityIcon />, line: true },
  { title: 'Connect to instance | EC', icon: <Ec2Icon />, line: true, fades: true },
  { title: 'EC2 Instance Connect', icon: <CubeIcon />, line: true },
  { title: 'Setup Wizard [Jenkins]', icon: <ButlerIcon /> },
  { title: 'ecommerce [Jenkins]', icon: <ButlerIcon />, active: true },
  { title: 'nd035-c4-Security-and-', icon: <FaGithub size={16} color="#24292f" />, line: true, fades: true },
];

const bookmarks = [
  { label: 'Workplace', icon: <MicrosoftIcon /> },
  { label: 'qms Document', icon: <FptIcon /> },
  { label: 'Corporate Training...', icon: <FptIcon /> },
  { label: 'Employee Self Servi...', icon: <FptIcon /> },
  { label: 'DN22_FR.B_JAVA_23', icon: <ClassroomIcon /> },
  { label: 'Microsoft Office Ho...', icon: <OfficeIcon /> },
  { label: 'Teams', icon: <TeamsIcon /> },
  { label: 'Quizizz', icon: <QuizizzIcon /> },
  { label: 'Vocabulary', icon: <SheetIcon /> },
  { label: '24h', icon: <ClockIcon /> },
  { label: 'C0322G1-Project | T...', icon: <TrelloIcon /> },
];

const tasks = [
  { label: 'Build Now', icon: <IoPlayOutline size={22} /> },
  { label: 'Configure', icon: <Settings size={22} strokeWidth={1.5} /> },
  { label: 'Delete Project', icon: <IoTrashOutline size={22} /> },
  { label: 'Favorite', icon: <FavoriteIcon /> },
  { label: 'GitHub', icon: <OctocatIcon /> },
  { label: 'Open Blue Ocean', icon: <OceanIcon /> },
  { label: 'Rename', icon: <PencilIcon /> },
];

const programs = [
  { label: 'On-screen keyboard', icon: <KeyboardScreenIcon /> },
  { label: 'Zalo', icon: <ZaloIcon /> },
  { label: 'Notepad++', icon: <NotepadIcon /> },
  { label: 'Windows Explorer', icon: <ExplorerIcon /> },
  { label: 'UniKey', icon: <UnikeyIcon /> },
  { label: 'Google Chrome', icon: <ChromeIcon />, open: true },
];

export default function App() {
  return (
    <Screen>
      <GlobalStyle />
      <TabStrip>
        {tabs.map(t => {
          const Title = t.fades ? FadingTitle : TabTitle;
          return (
            <TabItem key={t.title} $active={t.active} $line={t.line}>
              <TabLink href="#">
                {t.icon}
                <Title>{t.title}</Title>
              </TabLink>
              <TabClose aria-label={`Close ${t.title}`}><X size={13} strokeWidth={2.6} /></TabClose>
            </TabItem>
          );
        })}
        <StripButton aria-label="New tab"><Plus size={17} strokeWidth={2.6} /></StripButton>
        <StripEnd>
          <StripButton aria-label="Search tabs"><ChevronDown size={16} strokeWidth={2.4} /></StripButton>
          <WindowControls>
            <WindowButton aria-label="Minimize"><MinimizeIcon /></WindowButton>
            <WindowButton aria-label="Restore"><RestoreIcon /></WindowButton>
            <WindowButton $wide aria-label="Close window"><CloseWindowIcon /></WindowButton>
          </WindowControls>
        </StripEnd>
      </TabStrip>

      <Toolbar>
        <ToolButton aria-label="Back"><BackIcon /></ToolButton>
        <ToolButton $dim aria-label="Forward"><ForwardIcon /></ToolButton>
        <ToolButton aria-label="Reload"><ReloadIcon /></ToolButton>
        <ToolButton aria-label="Home"><HomeIcon /></ToolButton>
        <Omnibox>
          <SiteInfo type="button"><WarningIcon />Không bảo mật</SiteInfo>
          <Address aria-label="Address" defaultValue="ec2-18-212-158-87.compute-1.amazonaws.com:8080/job/ecommerce/" />
          <ToolButton type="button" aria-label="Share"><ShareIcon /></ToolButton>
          <ToolButton type="button" aria-label="Bookmark this page"><Star size={16} strokeWidth={2} color="#5f5158" /></ToolButton>
        </Omnibox>
        <ToolButton aria-label="Translate"><TranslateIcon /></ToolButton>
        <ToolButton aria-label="Extensions"><PuzzleIcon /></ToolButton>
        <ToolButton aria-label="Side panel"><PanelIcon /></ToolButton>
        <ToolButton aria-label="Profile"><AvatarIcon /></ToolButton>
        <ToolButton aria-label="Menu"><DotsIcon /></ToolButton>
      </Toolbar>

      <Bookmarks aria-label="Bookmarks">
        {bookmarks.map(b => <Bookmark key={b.label} href="#">{b.icon}{b.label}</Bookmark>)}
        <MoreBookmarks aria-label="More bookmarks"><MoreIcon /></MoreBookmarks>
      </Bookmarks>

      <Viewport>
        <Page>
          <Breadcrumbs aria-label="Breadcrumb">
            <Haze $left={394} $top={28} $w={38} $h={30} />
            <Haze $left={1178} $top={-30} $w={148} $h={48} />
            <ol>
              <li><Crumb href="#">Dashboard</Crumb><CrumbArrow aria-label="Dashboard menu"><ChevronRight size={16} strokeWidth={1.5} /></CrumbArrow></li>
              <li><Crumb href="#">ecommerce</Crumb><CrumbArrow aria-label="ecommerce menu"><ChevronRight size={16} strokeWidth={1.5} /></CrumbArrow></li>
            </ol>
          </Breadcrumbs>
          <Body>
            <Side>
              <TaskList>
                {tasks.map(t => (
                  <li key={t.label}><TaskLink href="#"><TaskIcon>{t.icon}</TaskIcon>{t.label}</TaskLink></li>
                ))}
              </TaskList>
              <HistoryHead>
                <WeatherIcon />
                <HistoryTitle>Build History</HistoryTitle>
                <TrendLink href="#">trend</TrendLink>
                <button aria-label="Collapse"><ChevronDown size={16} strokeWidth={2} /></button>
              </HistoryHead>
              <FilterBox>
                <Search size={16} strokeWidth={1.5} />
                <FilterInput aria-label="Filter builds" placeholder="Filter builds..." />
              </FilterBox>
              <BuildRow>
                <BuildTop>
                  <RunningIcon />
                  <BuildLink href="#">#1</BuildLink>
                  <button aria-label="Cancel build"><StopIcon /></button>
                </BuildTop>
                <BuildInfo>
                  <BuildDate href="#">Aug 19, 2023, 12:06 PM</BuildDate>
                  <Progress role="progressbar" aria-label="Build progress" />
                </BuildInfo>
              </BuildRow>
              <Feeds>
                <FeedLink href="#"><FeedIcon /><span>Atom feed for all</span></FeedLink>
                <FeedLink href="#"><FeedIcon /><span>Atom feed for failures</span></FeedLink>
              </Feeds>
            </Side>
            <Main>
              <ShortcutList>
                <li><Shortcut href="#"><FolderIcon /><span>Workspace</span></Shortcut></li>
                <li><Shortcut href="#"><CodeIcon /><span>Recent Changes</span></Shortcut></li>
              </ShortcutList>
              <Heading>Permalinks</Heading>
            </Main>
          </Body>
          <Footer>
            <a href="#">REST API</a>
            <a href="#">Jenkins 2.346.3</a>
          </Footer>
        </Page>
        <ScrollTrack>
          <ScrollArrow aria-label="Scroll up"><Triangle color="#444c46" /></ScrollArrow>
          <ScrollSpace />
          <ScrollThumb />
          <ScrollArrow aria-label="Scroll down"><Triangle down color="#9aa39c" /></ScrollArrow>
        </ScrollTrack>
      </Viewport>

      <Taskbar>
        <StartButton aria-label="Start"><StartIcon /></StartButton>
        {programs.map(p => <TaskButton key={p.label} $open={p.open} aria-label={p.label}>{p.icon}</TaskButton>)}
        <Tray>
          <Language>EN</Language>
          <TrayButton aria-label="Hidden icons"><Triangle color="#fff" /></TrayButton>
          <TrayButton aria-label="Power"><PowerIcon /></TrayButton>
          <TrayButton aria-label="Volume"><SpeakerIcon /></TrayButton>
          <TrayButton aria-label="Network"><SignalIcon /></TrayButton>
          <Clock dateTime="2023-08-19T19:10">19:10<br />19/08/2023</Clock>
          <ShowDesktop aria-label="Show desktop" />
        </Tray>
      </Taskbar>
    </Screen>
  );
}
